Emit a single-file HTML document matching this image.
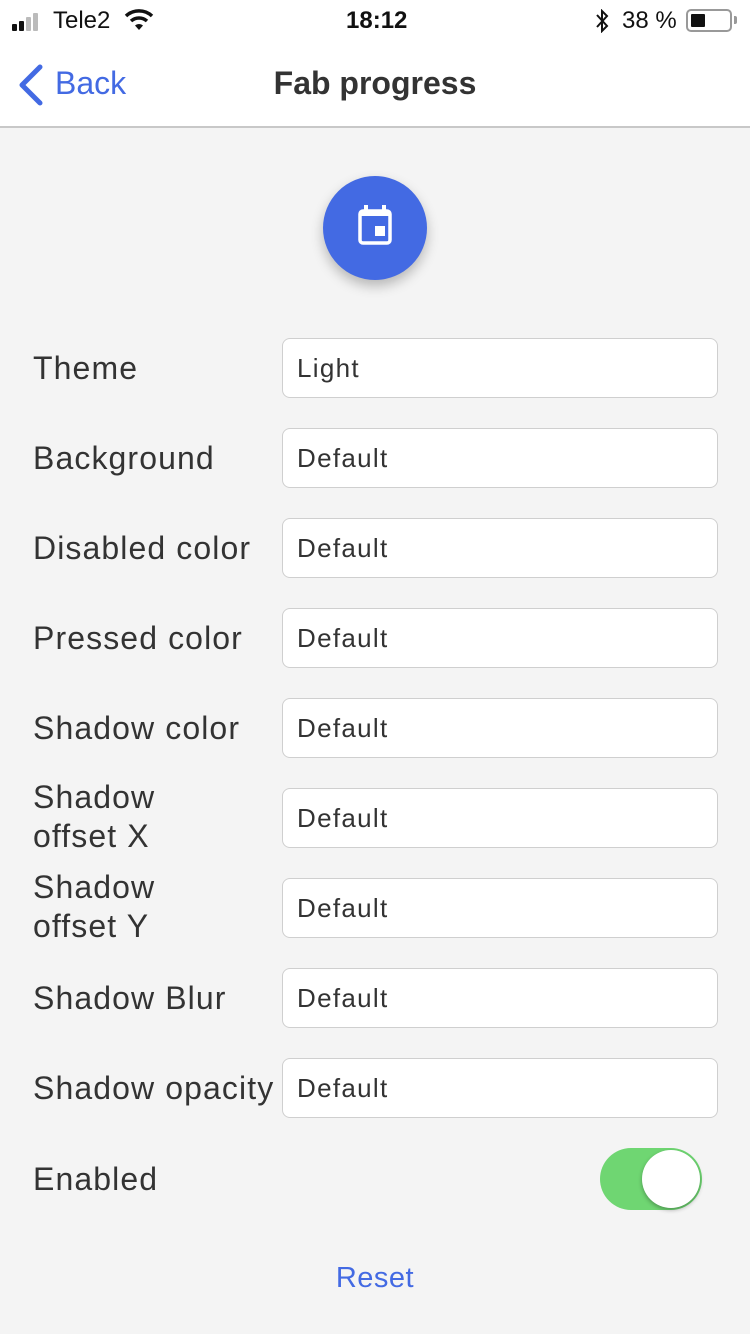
<!DOCTYPE html>
<html><head><meta charset="utf-8"><style>
*{box-sizing:border-box;margin:0;padding:0}
body{width:750px;height:1334px;background:#f4f4f4;font-family:"Liberation Sans",sans-serif;color:#333;position:relative;overflow:hidden}
.top{position:absolute;left:0;top:0;width:750px;height:128px;background:#fff;border-bottom:2px solid #c8c8c8}
.abs{position:absolute}
.lbl{position:absolute;left:33px;font-size:32px;letter-spacing:1.1px;color:#333;line-height:39px}
.inp{position:absolute;left:282px;width:436px;height:60px;background:#fff;border:1px solid #cfcfcf;border-radius:8px;font-size:26px;letter-spacing:1.3px;padding-left:14px;line-height:58px;color:#333}
</style></head><body>
<div class="top">
  <div class="abs" style="left:12px;top:13px;width:30px;height:18px">
    <div class="abs" style="left:0;top:11px;width:5px;height:7px;background:#111;border-radius:1px"></div>
    <div class="abs" style="left:7px;top:8px;width:5px;height:10px;background:#111;border-radius:1px"></div>
    <div class="abs" style="left:14px;top:4px;width:5px;height:14px;background:#bbb;border-radius:1px"></div>
    <div class="abs" style="left:21px;top:0;width:5px;height:18px;background:#bbb;border-radius:1px"></div>
  </div>
  <div class="abs" style="left:53px;top:7px;font-size:24px;color:#111">Tele2</div>
  <svg class="abs" style="left:124px;top:8px" width="30" height="22" viewBox="0 0 30 22"><path d="M2 8 A19 19 0 0 1 28 8" stroke="#111" stroke-width="3.5" fill="none"/><path d="M7 13 A12 12 0 0 1 23 13" stroke="#111" stroke-width="3.5" fill="none"/><path d="M11 17.5 L15 22 L19 17.5 A6 6 0 0 0 11 17.5Z" fill="#111"/></svg>
  <div class="abs" style="left:346px;top:7px;font-size:24px;font-weight:bold;color:#111">18:12</div>
  <svg class="abs" style="left:594px;top:9px" width="16" height="24" viewBox="0 0 16 24"><path d="M3 6 L13 17 L8 22 L8 2 L13 7 L3 18" stroke="#111" stroke-width="2" fill="none"/></svg>
  <div class="abs" style="left:622px;top:7px;font-size:24px;color:#111">38 %</div>
  <div class="abs" style="left:686px;top:9px;width:46px;height:23px;border:2px solid #999;border-radius:5px"><div class="abs" style="left:3px;top:3px;width:14px;height:13px;background:#111;border-radius:1px"></div></div>
  <div class="abs" style="left:734px;top:16px;width:3px;height:8px;background:#999;border-radius:0 2px 2px 0"></div>
  <svg class="abs" style="left:16px;top:64px" width="28" height="42" viewBox="0 0 28 42"><path d="M24 3 L6 21 L24 39" stroke="#436ae3" stroke-width="5" fill="none" stroke-linecap="round" stroke-linejoin="round"/></svg>
  <div class="abs" style="left:55px;top:65px;font-size:32px;color:#436ae3">Back</div>
  <div class="abs" style="left:0;width:750px;top:65px;text-align:center;font-size:32px;font-weight:bold;color:#333">Fab progress</div>
</div>
<div class="abs" style="left:323px;top:176px;width:104px;height:104px;border-radius:50%;background:#436ae3;box-shadow:0 6px 12px rgba(0,0,0,0.25)">
  <svg class="abs" style="left:33px;top:27px" width="38" height="44" viewBox="0 0 38 44"><path d="M10 2 V8 M28 2 V8" stroke="#fff" stroke-width="4"/><rect x="4" y="8" width="30" height="32" rx="3" fill="none" stroke="#fff" stroke-width="3.5"/><rect x="4" y="8" width="30" height="5" fill="#fff"/><rect x="19" y="23" width="10" height="10" fill="#fff"/></svg>
</div>
<div class="lbl" style="top:349px">Theme</div><div class="inp" style="top:338px">Light</div>
<div class="lbl" style="top:439px">Background</div><div class="inp" style="top:428px">Default</div>
<div class="lbl" style="top:529px">Disabled color</div><div class="inp" style="top:518px">Default</div>
<div class="lbl" style="top:619px">Pressed color</div><div class="inp" style="top:608px">Default</div>
<div class="lbl" style="top:709px">Shadow color</div><div class="inp" style="top:698px">Default</div>
<div class="lbl" style="top:778px">Shadow<br>offset X</div><div class="inp" style="top:788px">Default</div>
<div class="lbl" style="top:868px">Shadow<br>offset Y</div><div class="inp" style="top:878px">Default</div>
<div class="lbl" style="top:979px">Shadow Blur</div><div class="inp" style="top:968px">Default</div>
<div class="lbl" style="top:1069px">Shadow opacity</div><div class="inp" style="top:1058px">Default</div>
<div class="lbl" style="top:1160px">Enabled</div>
<div class="abs" style="left:600px;top:1148px;width:102px;height:62px;border-radius:31px;background:#6fd672"></div>
<div class="abs" style="left:642px;top:1150px;width:58px;height:58px;border-radius:50%;background:#fff;box-shadow:0 2px 4px rgba(0,0,0,0.3)"></div>
<div class="abs" style="left:0;width:750px;top:1262px;text-align:center;font-size:29px;letter-spacing:0.5px;color:#436ae3">Reset</div>
</body></html>
